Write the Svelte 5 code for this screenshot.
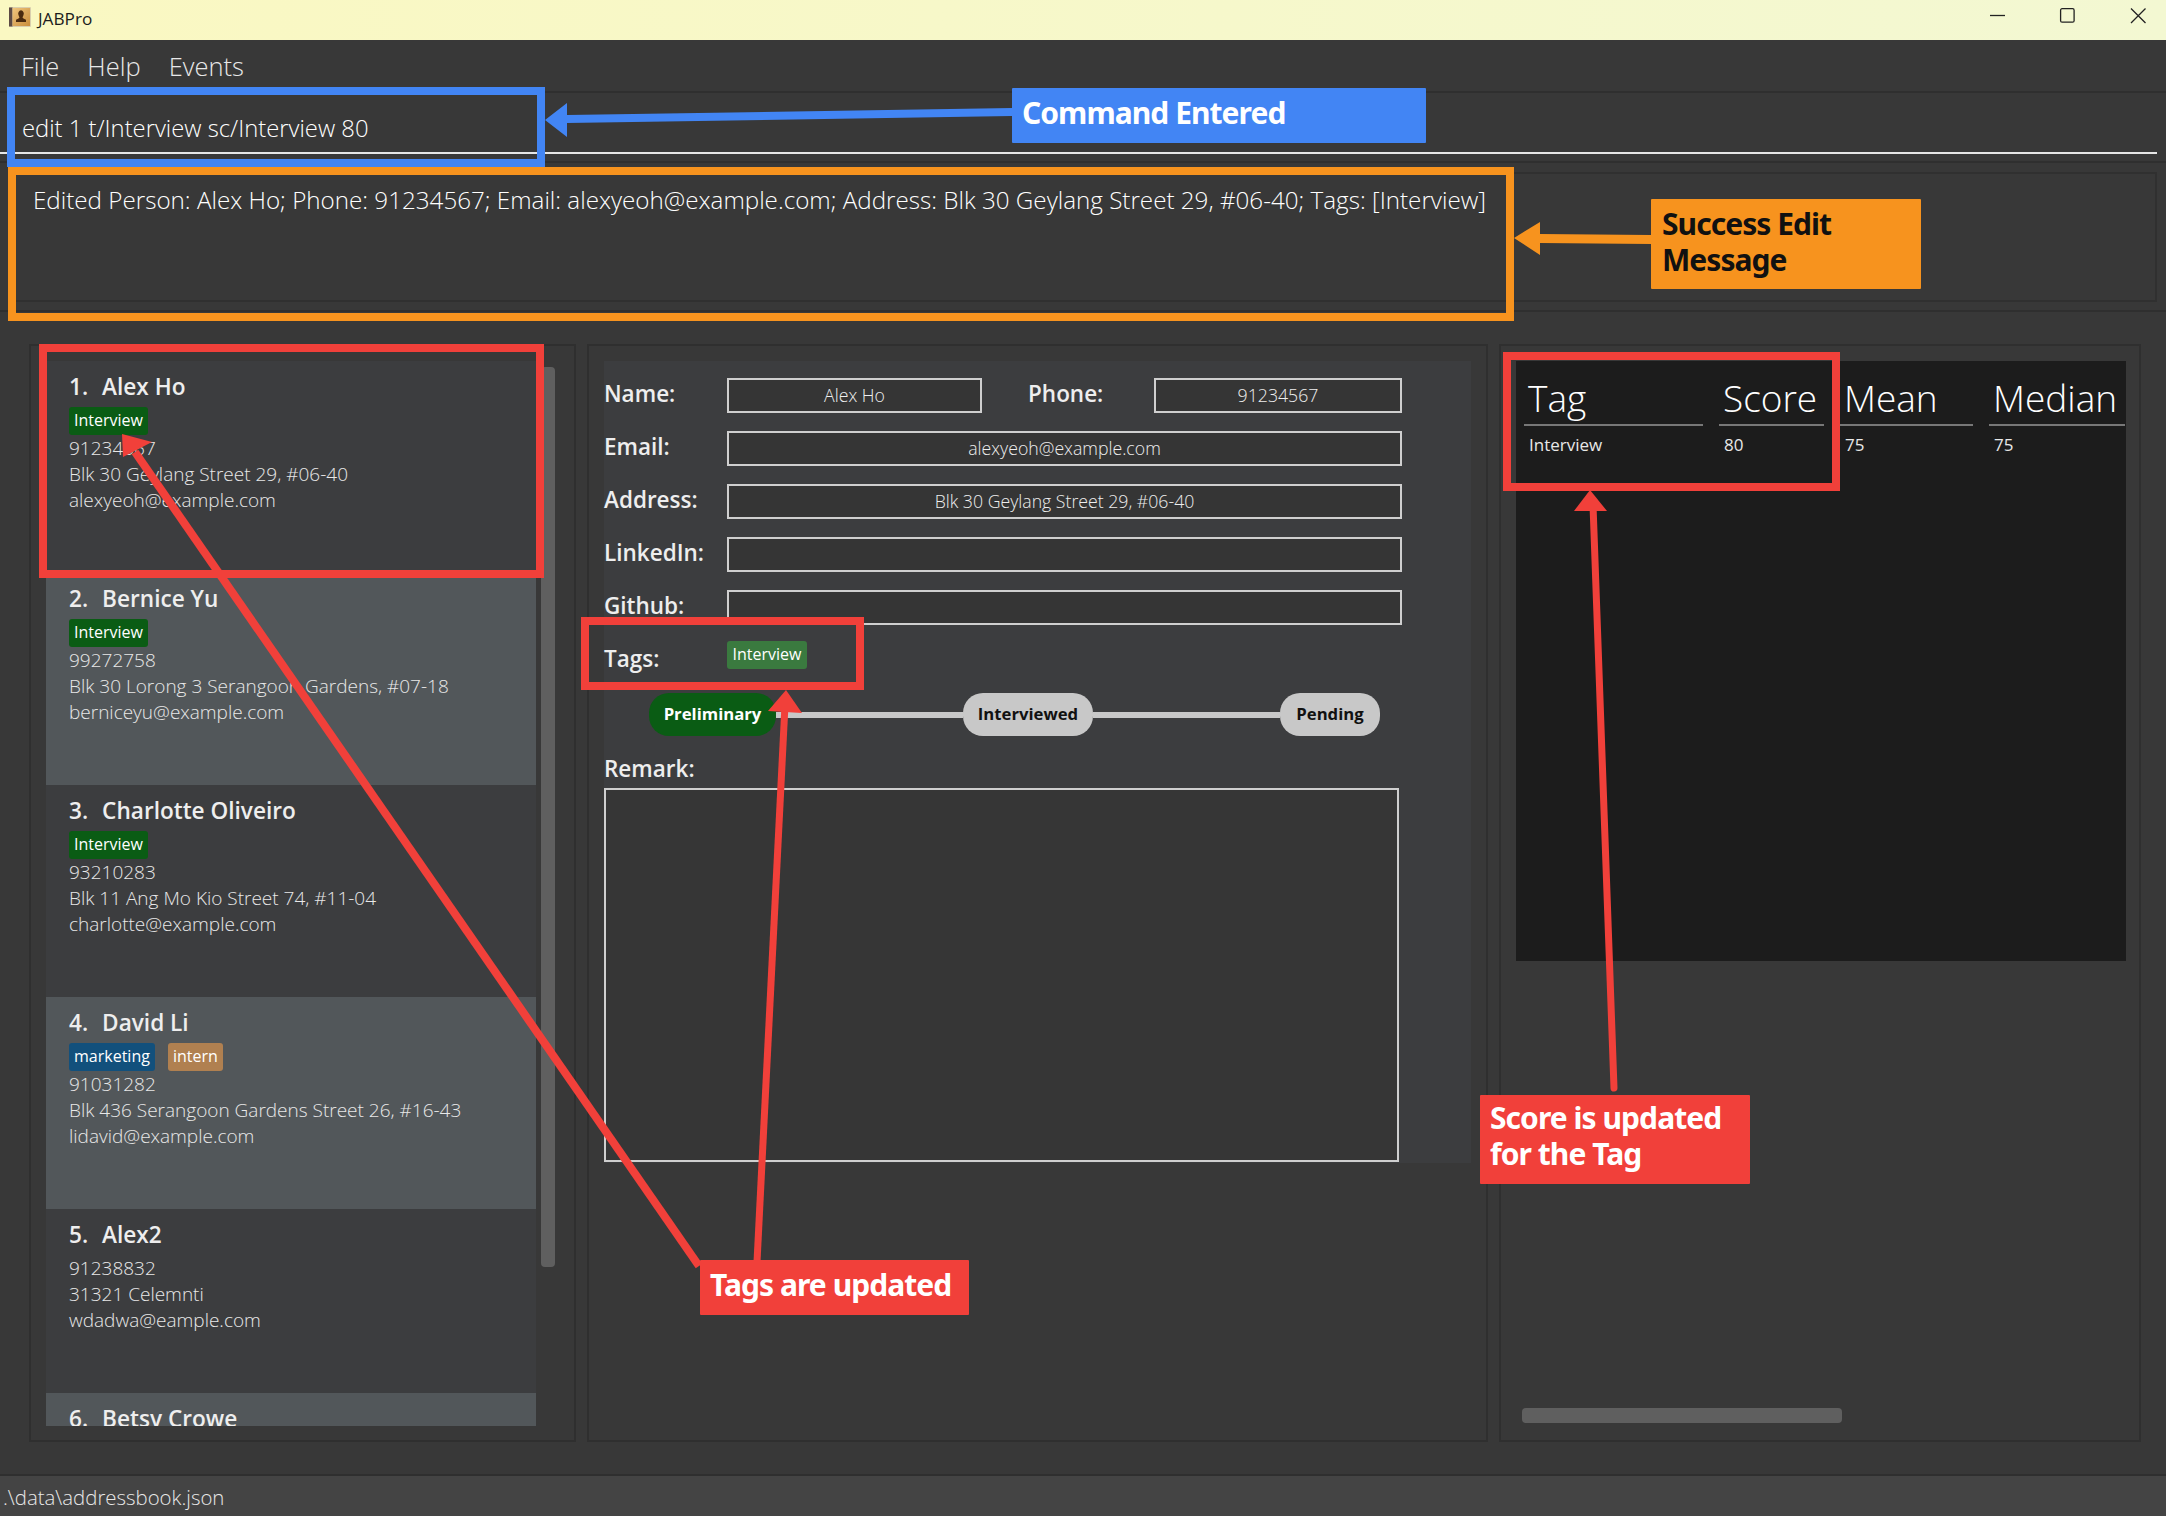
<script>
  const people = [
    { n: '1.', name: 'Alex Ho', tags: [['Interview', 'green']], phone: '91234567', addr: 'Blk 30 Geylang Street 29, #06-40', email: 'alexyeoh@example.com' },
    { n: '2.', name: 'Bernice Yu', tags: [['Interview', 'green']], phone: '99272758', addr: 'Blk 30 Lorong 3 Serangoon Gardens, #07-18', email: 'berniceyu@example.com' },
    { n: '3.', name: 'Charlotte Oliveiro', tags: [['Interview', 'green']], phone: '93210283', addr: 'Blk 11 Ang Mo Kio Street 74, #11-04', email: 'charlotte@example.com' },
    { n: '4.', name: 'David Li', tags: [['marketing', 'blue'], ['intern', 'tan']], phone: '91031282', addr: 'Blk 436 Serangoon Gardens Street 26, #16-43', email: 'lidavid@example.com' },
    { n: '5.', name: 'Alex2', tags: [], phone: '91238832', addr: '31321 Celemnti', email: 'wdadwa@eample.com' },
    { n: '6.', name: 'Betsy Crowe', tags: [], phone: '', addr: '', email: '' }
  ];
  const rows = [
    ['Email:', 'alexyeoh@example.com'],
    ['Address:', 'Blk 30 Geylang Street 29, #06-40'],
    ['LinkedIn:', ''],
    ['Github:', '']
  ];
  const cols = [['Tag', 'Interview'], ['Score', '80'], ['Mean', '75'], ['Median', '75']];
</script>

<div class="app">
  <header class="title">
    <svg class="logo" viewBox="0 0 22 20" width="22" height="20">
      <defs>
        <linearGradient id="page" x1="0" y1="0" x2="1" y2="1">
          <stop offset="0" stop-color="#efc57d" />
          <stop offset="1" stop-color="#c98d3c" />
        </linearGradient>
      </defs>
      <rect x="0" y="0" width="22" height="20" rx="1" fill="#d9cfae" />
      <rect x="0" y="0.5" width="3.5" height="19" fill="#5c4a44" />
      <rect x="3.5" y="1" width="17.5" height="18" fill="url(#page)" />
      <path d="M9.5 8 a2.8 3.2 0 1 1 5 0 q-.6 1.8 -1 2.6 q.2 1 3.5 2.2 v2.2 h-10 v-2.2 q3.3 -1.2 3.5 -2.2 q-.4 -.8 -1 -2.6 Z" fill="#4a2b10" />
    </svg>
    <span class="title-text">JABPro</span>
    <span class="spacer"></span>
    <svg class="controls" width="156" height="20" viewBox="0 0 156 20" fill="none" stroke="#222" stroke-width="1.3">
      <path d="M0 7.5H15" />
      <rect x="70.6" y="0.7" width="13.5" height="13.5" rx="1.5" />
      <path d="M141 0.5L155.5 15M155.5 0.5L141 15" />
    </svg>
  </header>

  <nav class="menu">
    <span>File</span><span>Help</span><span>Events</span>
  </nav>

  <section class="command">
    <div class="command-text">edit 1 t/Interview sc/Interview 80</div>
  </section>

  <section class="result-wrap">
    <div class="result">Edited Person: Alex Ho; Phone: 91234567; Email: alexyeoh@example.com; Address: Blk 30 Geylang Street 29, #06-40; Tags: [Interview]</div>
  </section>

  <main class="main">
    <div class="panel list-panel">
      <div class="list">
        {#each people as p, i}
          <article class="card" class:alt={i % 2 === 1} class:notag={p.tags.length === 0}>
            <div class="name"><span class="num">{p.n}</span>{p.name}</div>
            {#if p.tags.length}
              <div class="tags">
                {#each p.tags as t}<span class="tag {t[1]}">{t[0]}</span>{/each}
              </div>
            {/if}
            <div class="line">{p.phone}</div>
            <div class="line">{p.addr}</div>
            <div class="line">{p.email}</div>
          </article>
        {/each}
      </div>
      <div class="vbar"></div>
    </div>

    <div class="panel detail-panel">
      <div class="detail">
        <div class="row">
          <div class="lbl">Name:</div>
          <div class="field name-field">Alex Ho</div>
          <div class="lbl phone-lbl">Phone:</div>
          <div class="field phone-field">91234567</div>
        </div>
        {#each rows as r}
          <div class="row">
            <div class="lbl">{r[0]}</div>
            <div class="field wide">{r[1]}</div>
          </div>
        {/each}
        <div class="tags-row">
          <div class="lbl">Tags:</div>
          <span class="tag chip">Interview</span>
        </div>
        <div class="timeline">
          <span class="pill active">Preliminary</span>
          <span class="seg"></span>
          <span class="pill p2">Interviewed</span>
          <span class="seg"></span>
          <span class="pill p3">Pending</span>
        </div>
        <div class="lbl remark-lbl">Remark:</div>
        <div class="remark"></div>
      </div>
    </div>

    <div class="panel stats-panel">
      <div class="table">
        {#each cols as c}
          <div class="col">
            <div class="th">{c[0]}</div>
            <div class="td">{c[1]}</div>
          </div>
        {/each}
      </div>
      <div class="hbar"></div>
    </div>
  </main>

  <footer class="status">.\data\addressbook.json</footer>

  <!-- annotations laid over the app -->
  <svg class="arrows" width="2166" height="1516" viewBox="0 0 2166 1516">
    <polygon fill="#4285f4" points="545,120 567,103 567,115 1012,108 1012,116 567,123 567,137" />
    <polygon fill="#f7931e" points="1514,238 1540,222 1540,234 1651,235 1651,244 1540,243 1540,255" />
    <g fill="#f1403a" stroke="#f1403a">
      <line x1="699" y1="1266" x2="135" y2="452" stroke-width="8" />
      <polygon stroke="none" points="122,434 152,442 123,457" />
      <line x1="757" y1="1262" x2="785" y2="705" stroke-width="7" />
      <polygon stroke="none" points="786,690 802,713 768,711" />
      <line x1="1614" y1="1088" x2="1593" y2="505" stroke-width="7" stroke-linecap="round" />
      <polygon stroke="none" points="1590,490 1607,511 1574,511" />
    </g>
  </svg>
  <div class="box blue-box"></div>
  <div class="box orange-box"></div>
  <div class="box red-card"></div>
  <div class="box red-tags"></div>
  <div class="box red-table"></div>
  <div class="note note-blue">Command Entered</div>
  <div class="note note-orange">Success Edit<br />Message</div>
  <div class="note note-tags">Tags are updated</div>
  <div class="note note-score">Score is updated<br />for the Tag</div>
</div>

<style>
  :global(body) { margin: 0; background: #383838; }
  .app {
    position: relative;
    width: 2166px;
    height: 1516px;
    overflow: hidden;
    display: flex;
    flex-direction: column;
    background: #383838;
    color: #e8e8e8;
    font-family: "Open Sans", "Noto Sans", sans-serif;
    font-weight: 300;
  }
  .title {
    flex: 0 0 40px;
    display: flex;
    align-items: center;
    padding: 0 20px 0 9px;
    background: linear-gradient(90deg, #faf8c2, #f3f8d2);
    color: #1c1c1c;
    font-weight: 400;
    font-size: 17.2px;
    box-sizing: border-box;
  }
  .logo { margin-right: 7px; margin-top: -6px; }
  .title-text { margin-top: -4px; }
  .spacer { flex: 1; }
  .controls { margin-top: -4px; }
  .menu {
    flex: 0 0 53px;
    box-sizing: border-box;
    display: flex;
    gap: 28px;
    align-items: center;
    padding: 0 0 0 21px;
    font-size: 25.5px;
    border-bottom: 2px solid #2f2f2f;
  }
  .command {
    flex: 0 0 68px;
    box-sizing: border-box;
    margin: 0 9px 0 0;
    padding: 22px 0 0 22px;
    font-size: 23.8px;
    color: #fff;
    position: relative;
  }
  .command-text {
    height: 37px;
    line-height: 26px;
    border-bottom: 2px solid #e6e6e6;
    margin-left: -22px;
    padding-left: 22px;
  }
  .result-wrap {
    flex: 0 0 151px;
    box-sizing: border-box;
    border-top: 2px solid #2f2f2f;
    border-bottom: 2px solid #2f2f2f;
    padding: 9px 9px 8px 9px;
  }
  .result {
    height: 130px;
    box-sizing: border-box;
    border: 2px solid #303030;
    padding: 10px 22px;
    font-size: 24.2px;
    line-height: 32px;
    color: #fff;
    white-space: nowrap;
  }
  .main {
    flex: 1;
    display: flex;
    padding: 32px 25px 32px 29px;
    gap: 11px;
  }
  .panel {
    box-sizing: border-box;
    border: 2px solid #2f2f2f;
    height: 1098px;
  }
  .list-panel {
    width: 547px;
    padding: 15px 0 0 15px;
    display: flex;
    gap: 5px;
  }
  .list {
    width: 490px;
    height: 1065px;
    overflow: hidden;
    flex: none;
  }
  .card {
    height: 212px;
    box-sizing: border-box;
    padding: 12px 23px;
    background: #3c3d3f;
    font-size: 19px;
  }
  .card.notag { height: 184px; }
  .card.alt { background: #52575a; }
  .name {
    font-size: 22.6px;
    font-weight: 600;
    line-height: 28px;
    margin-bottom: 6px;
    color: #eeeeee;
    white-space: nowrap;
  }
  .num { margin-right: 14px; }
  .tags { display: flex; gap: 13px; height: 28px; }
  .tag {
    height: 28px;
    line-height: 26px;
    padding: 0 5px;
    border-radius: 3px;
    font-size: 16px;
    font-weight: 500;
    color: #fff;
    box-sizing: border-box;
  }
  .green { background: #0a5c14; }
  .blue { background: #12507c; }
  .tan { background: #b08050; }
  .line { height: 26px; line-height: 26px; white-space: nowrap; }
  .vbar {
    width: 14px;
    height: 900px;
    margin-top: 6px;
    border-radius: 4px;
    background: #5f5f5f;
  }
  .detail-panel { width: 901px; padding: 15px 0 0 15px; }
  .detail {
    width: 867px;
    height: 802px;
    box-sizing: border-box;
    background: #3c3d3f;
    padding: 17px 0 0 0;
  }
  .row {
    display: flex;
    align-items: center;
    height: 35px;
    margin-bottom: 18px;
  }
  .lbl {
    width: 123px;
    font-size: 22.5px;
    font-weight: 600;
    color: #eeeeee;
    flex: none;
    position: relative;
    top: -2px;
  }
  .phone-lbl { width: 126px; margin-left: 46px; }
  .field {
    box-sizing: border-box;
    height: 35px;
    border: 2px solid #cfcfcf;
    background: #353535;
    font-size: 17.7px;
    line-height: 31px;
    text-align: center;
    color: #eee;
    flex: none;
  }
  .name-field { width: 255px; }
  .phone-field { width: 248px; }
  .wide { width: 675px; }
  .tags-row {
    display: flex;
    height: 36px;
    align-items: flex-start;
    margin-top: -1px;
  }
  .tags-row .lbl { line-height: 36px; top: -1px; }
  .chip { background: #3a7a3f; display: block; margin-top: -1px; font-weight: 400; padding: 0 5px; width: 80px; text-align: center; }
  .timeline {
    display: flex;
    align-items: center;
    height: 43px;
    margin: 15px 0 0 45px;
    width: 731px;
  }
  .pill {
    height: 43px;
    line-height: 42px;
    border-radius: 20px;
    background: #c8c8c8;
    color: #111;
    font-size: 16.7px;
    font-weight: 700;
    text-align: center;
    flex: none;
    box-sizing: border-box;
  }
  .pill.active { width: 127px; background: #0a5c14; color: #fff; }
  .p2 { width: 130px; }
  .p3 { width: 100px; }
  .seg { flex: 1; height: 6px; background: #c8c8c8; }
  .remark-lbl { width: auto; margin-top: 20px; line-height: 26px; top: 0; }
  .remark {
    margin-top: 6px;
    box-sizing: border-box;
    width: 795px;
    height: 374px;
    border: 2px solid #cfcfcf;
    background: #363636;
  }
  .stats-panel { width: 642px; padding: 15px 0 0 15px; }
  .table {
    display: grid;
    grid-template-columns: 179px 105px 133px 136px;
    column-gap: 16px;
    align-content: start;
    width: 610px;
    height: 600px;
    box-sizing: border-box;
    padding: 15px 0 0 8px;
    background: #1c1c1c;
  }
  .th {
    height: 48px;
    line-height: 44px;
    font-size: 37px;
    padding-left: 4px;
    border-bottom: 2px solid #777;
    color: #fff;
    white-space: nowrap;
    box-sizing: content-box;
  }
  .td { padding: 7px 0 0 5px; font-size: 17px; line-height: 24px; font-weight: 400; }
  .hbar {
    width: 320px;
    height: 15px;
    margin: 447px 0 0 6px;
    border-radius: 4px;
    background: #5f5f5f;
  }
  .status {
    flex: 0 0 42px;
    box-sizing: border-box;
    background: #444;
    border-top: 2px solid #2f2f2f;
    padding-left: 3px;
    line-height: 42px;
    font-size: 20.4px;
  }
  .arrows { position: absolute; left: 0; top: 0; pointer-events: none; }
  .box { position: absolute; box-sizing: border-box; border-style: solid; }
  .blue-box { left: 7px; top: 87px; width: 538px; height: 80px; border-width: 8px; border-color: #4285f4; }
  .orange-box { left: 8px; top: 167px; width: 1506px; height: 154px; border-width: 8px; border-color: #f7931e; }
  .red-card { left: 39px; top: 344px; width: 505px; height: 234px; border-width: 8px; border-color: #f1403a; }
  .red-tags { left: 581px; top: 617px; width: 283px; height: 73px; border-width: 8px; border-color: #f1403a; }
  .red-table { left: 1503px; top: 352px; width: 337px; height: 139px; border-width: 8px; border-color: #f1403a; }
  .note {
    position: absolute;
    box-sizing: border-box;
    font-family: "Noto Sans", "Open Sans", sans-serif;
    font-weight: 700;
    font-size: 30px;
    letter-spacing: -0.95px;
    line-height: 36px;
    color: #fff;
    border-radius: 1px;
    white-space: nowrap;
  }
  .note-blue { left: 1012px; top: 88px; width: 414px; height: 55px; padding: 7px 10px; background: #4285f4; }
  .note-orange { left: 1651px; top: 199px; width: 270px; height: 90px; padding: 7px 11px; background: #f7931e; color: #111; }
  .note-tags { left: 700px; top: 1260px; width: 269px; height: 55px; padding: 7px 10px; background: #f1403a; }
  .note-score { left: 1480px; top: 1095px; width: 270px; height: 89px; padding: 5px 10px; background: #f1403a; }
</style>
